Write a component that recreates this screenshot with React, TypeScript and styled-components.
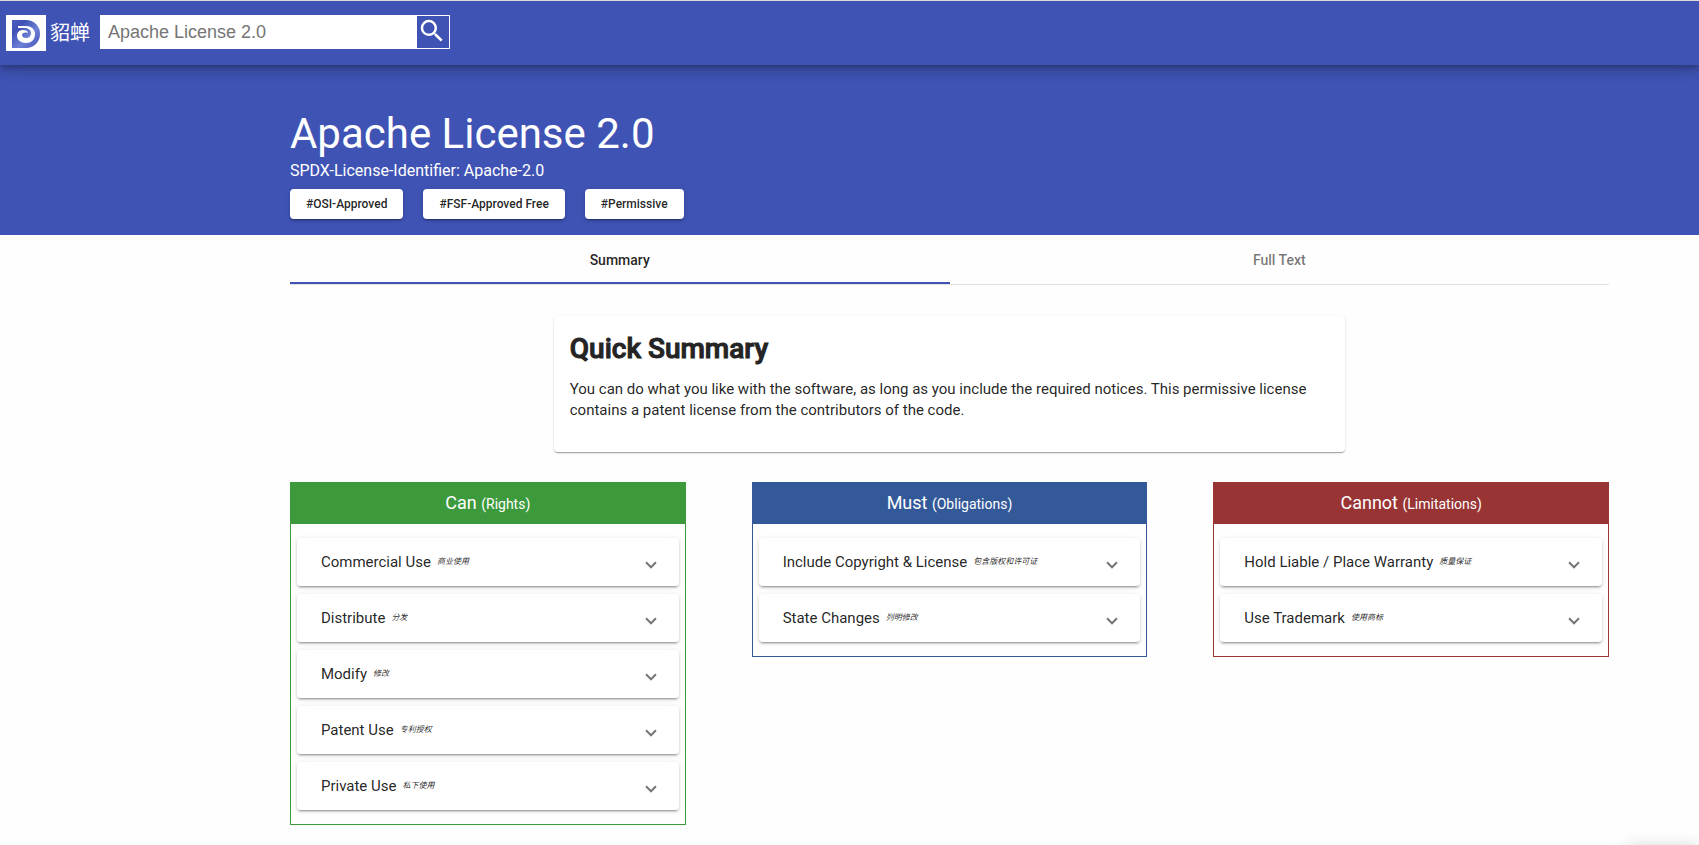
import React, { useState } from "react";
import styled, { createGlobalStyle } from "styled-components";

const primary = "#3f53b4";
const ink = "rgba(0, 0, 0, 0.87)";
const cardShadow =
  "0 3px 1px -2px rgba(0,0,0,.2), 0 2px 2px 0 rgba(0,0,0,.14), 0 1px 5px 0 rgba(0,0,0,.12)";
const flatShadow =
  "0 2px 1px -1px rgba(0,0,0,.2), 0 1px 1px 0 rgba(0,0,0,.14), 0 1px 3px 0 rgba(0,0,0,.12)";

const GlobalStyle = createGlobalStyle`
  *, *::before, *::after { box-sizing: border-box; }
  body {
    margin: 0;
    background: #fefefe;
    color: ${ink};
    font-family: Roboto, "Noto Sans CJK SC", sans-serif;
  }
  h1, h2, p { margin: 0; }
`;

const Toolbar = styled.header`
  position: relative;
  z-index: 2;
  display: flex;
  align-items: flex-start;
  height: 65px;
  padding: 14px 6px;
  border-top: 1px solid #dcdcdc;
  background: ${primary};
  box-shadow: 0 3px 5px -1px rgba(0,0,0,.2), 0 6px 10px 0 rgba(0,0,0,.14), 0 1px 18px 0 rgba(0,0,0,.12);
`;

const Brand = styled.a`
  display: flex;
  align-items: center;
  gap: 4px;
  margin-right: 10px;
  color: #fff;
  font-size: 20px;
  line-height: 32px;
  text-decoration: none;
`;

const Search = styled.form`
  display: flex;
  width: 350px;
  height: 34px;
  border: 1px solid #fff;
`;

const SearchInput = styled.input`
  flex: 1;
  min-width: 0;
  padding: 0 7px;
  border: 0;
  outline: 0;
  background: #fff;
  font-family: "Liberation Sans", Arial, sans-serif;
  font-size: 18px;
  &::placeholder { color: #757575; opacity: 1; }
`;

const SearchButton = styled.button`
  display: flex;
  align-items: flex-start;
  width: 32px;
  padding: 0;
  border: 0;
  background: ${primary};
  color: #fff;
  cursor: pointer;
`;

const Hero = styled.section`
  padding: 45px 0 16px 200px;
  background: ${primary};
  color: #fff;
`;

const Content = styled.main`
  padding: 0 0 20px 200px;
`;

const Container = styled.div`
  width: 88%;
  margin: 0 auto;
`;

const Title = styled.h1`
  font-size: 42px;
  font-weight: 400;
  line-height: 48px;
`;

const Identifier = styled.p`
  font-size: 16px;
  line-height: 26px;
`;

const Tags = styled.div`
  display: flex;
  gap: 20px;
  margin-top: 5px;
`;

const Tag = styled.button`
  height: 30px;
  padding: 0 16px;
  border: 0;
  border-radius: 4px;
  background: #fff;
  color: ${ink};
  box-shadow: ${cardShadow};
  font: 500 12px/30px Roboto, sans-serif;
  cursor: pointer;
`;

const TabList = styled.div`
  display: flex;
  border-bottom: 1px solid #e0e0e0;
`;

const Tab = styled.button<{ $active: boolean }>`
  flex: 1;
  height: 49px;
  padding: 2px 0 0;
  border: 0;
  border-bottom: 2px solid ${(p) => (p.$active ? primary : "transparent")};
  background: transparent;
  color: ${(p) => (p.$active ? ink : "rgba(0, 0, 0, 0.54)")};
  font: 500 14px/20px Roboto, sans-serif;
  cursor: pointer;
`;

const SummaryCard = styled.section`
  width: 60%;
  min-height: 136px;
  margin: 31px auto 30px;
  padding: 16px;
  border-radius: 4px;
  background: #fff;
  box-shadow: ${flatShadow};
`;

const SummaryTitle = styled.h2`
  color: #242424;
  font-size: 28px;
  font-weight: 500;
  line-height: 33px;
  -webkit-text-stroke: 1px currentColor;
`;

const SummaryText = styled.p`
  margin-top: 14px;
  font-size: 15px;
  line-height: 21px;
`;

const Columns = styled.div`
  display: grid;
  grid-template-columns: repeat(3, 30%);
  justify-content: space-between;
  align-items: start;
`;

const Column = styled.section<{ $color: string }>`
  border: 1px solid ${(p) => p.$color};
`;

const ColumnTitle = styled.h2<{ $color: string }>`
  height: 41px;
  background: ${(p) => p.$color};
  color: #fff;
  font-size: 18px;
  font-weight: 400;
  line-height: 40px;
  text-align: center;
`;

const Kind = styled.span`
  font-size: 14px;
`;

const Rules = styled.div`
  display: flex;
  flex-direction: column;
  gap: 8px;
  padding: 14px 6px;
`;

const Rule = styled.button`
  display: flex;
  align-items: center;
  height: 48px;
  padding: 0 24px;
  border: 0;
  border-radius: 4px;
  background: #fff;
  color: ${ink};
  box-shadow: ${cardShadow};
  font: 400 15px/20px Roboto, "Noto Sans CJK SC", sans-serif;
  text-align: left;
  cursor: pointer;
`;

const Translation = styled.em`
  margin-left: 6px;
  font-size: 8px;
`;

const Chevron = styled.span`
  width: 8px;
  height: 8px;
  margin: 2px 0 0 auto;
  border: solid rgba(0, 0, 0, 0.54);
  border-width: 0 2px 2px 0;
  transform: rotate(45deg);
`;

const ParkedPanel = styled.aside`
  position: fixed;
  right: 0;
  bottom: -64px;
  width: 72px;
  height: 60px;
  box-shadow: 0 0 16px rgba(0, 0, 0, 0.24);
`;

const columns = [
  {
    title: "Can",
    kind: "(Rights)",
    color: "#3c9a3c",
    rules: [
      ["Commercial Use", "商业使用"],
      ["Distribute", "分发"],
      ["Modify", "修改"],
      ["Patent Use", "专利授权"],
      ["Private Use", "私下使用"],
    ],
  },
  {
    title: "Must",
    kind: "(Obligations)",
    color: "#345999",
    rules: [
      ["Include Copyright & License", "包含版权和许可证"],
      ["State Changes", "列明修改"],
    ],
  },
  {
    title: "Cannot",
    kind: "(Limitations)",
    color: "#993434",
    rules: [
      ["Hold Liable / Place Warranty", "质量保证"],
      ["Use Trademark", "使用商标"],
    ],
  },
];

const Logo = () => (
  <svg width="40" height="36" viewBox="0 0 40 36" aria-hidden="true">
    <defs>
      <linearGradient id="swirl" x1="0" y1="0" x2="1" y2="1">
        <stop offset="0" stopColor="#4a5cc0" />
        <stop offset="0.25" stopColor="#3f51b5" />
        <stop offset="0.6" stopColor="#7080d6" />
        <stop offset="1" stopColor="#3f51b5" />
      </linearGradient>
    </defs>
    <rect width="40" height="36" fill="#fff" />
    <path d="M6 5H20A14 14 0 0 1 20 33H6Z" fill="url(#swirl)" />
    <path
      d="M12 11H20C26 11 29 15 29 19C29 25 25 28 20 28C15 28 11 25 11 21C11 17 14 15 17 15C20 15 22 16 22 18C19 17 16 18 16 20C16 22 18 23 20 23C23 23 25 21 25 18C25 15 22 13 18 13H12Z"
      fill="#fff"
    />
  </svg>
);

export default function App() {
  const [tab, setTab] = useState("Summary");
  return (
    <>
      <GlobalStyle />
      <Toolbar>
        <Brand href="#">
          <Logo />
          貂蝉
        </Brand>
        <Search role="search" onSubmit={(e) => e.preventDefault()}>
          <SearchInput aria-label="Search licenses" placeholder="Apache License 2.0" />
          <SearchButton type="submit" aria-label="Search">
            <svg width="30" height="30" viewBox="0 0 24 24" fill="currentColor">
              <path d="M15.5 14h-.79l-.28-.27A6.471 6.471 0 0 0 16 9.5 6.5 6.5 0 1 0 9.5 16c1.61 0 3.09-.59 4.23-1.57l.27.28v.79l5 4.99L20.49 19l-4.99-5zm-6 0C7.01 14 5 11.99 5 9.5S7.01 5 9.5 5 14 7.01 14 9.5 11.99 14 9.5 14z" />
            </svg>
          </SearchButton>
        </Search>
      </Toolbar>
      <Hero>
        <Container>
          <Title>Apache License 2.0</Title>
          <Identifier>SPDX-License-Identifier: Apache-2.0</Identifier>
          <Tags>
            <Tag>#OSI-Approved</Tag>
            <Tag>#FSF-Approved Free</Tag>
            <Tag>#Permissive</Tag>
          </Tags>
        </Container>
      </Hero>
      <Content>
        <Container>
          <TabList role="tablist">
            {["Summary", "Full Text"].map((name) => (
              <Tab
                key={name}
                role="tab"
                aria-selected={tab === name}
                $active={tab === name}
                onClick={() => setTab(name)}
              >
                {name}
              </Tab>
            ))}
          </TabList>
          <SummaryCard>
            <SummaryTitle>Quick Summary</SummaryTitle>
            <SummaryText>
              You can do what you like with the software, as long as you include the required
              notices. This permissive license contains a patent license from the contributors of
              the code.
            </SummaryText>
          </SummaryCard>
          <Columns>
            {columns.map((c) => (
              <Column key={c.title} $color={c.color}>
                <ColumnTitle $color={c.color}>
                  {c.title} <Kind>{c.kind}</Kind>
                </ColumnTitle>
                <Rules>
                  {c.rules.map(([name, zh]) => (
                    <Rule key={name} aria-expanded={false}>
                      {name}
                      <Translation lang="zh">{zh}</Translation>
                      <Chevron />
                    </Rule>
                  ))}
                </Rules>
              </Column>
            ))}
          </Columns>
        </Container>
      </Content>
      <ParkedPanel aria-hidden="true" />
    </>
  );
}
